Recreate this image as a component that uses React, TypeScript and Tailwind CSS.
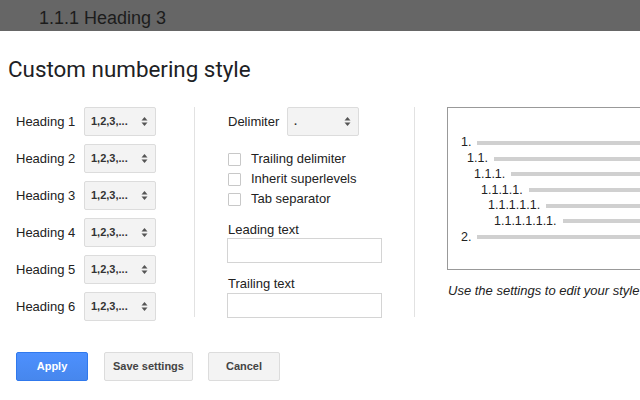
import React from 'react'

const arial = { fontFamily: '"Liberation Sans", Arial, sans-serif' }

function SelectBox({ value, width = 'w-[72px]' }: { value: string; width?: string }) {
  return (
    <div className={`${width} h-[29px] shrink-0 flex items-center justify-between pl-[6px] pr-[6px] bg-[#f3f3f3] border border-[#dcdcdc] rounded-[2px] text-[11px] font-bold text-[#333]`}>
      <span>{value}</span>
      <svg width="7" height="11" viewBox="0 0 7 11" className="mr-[1px]">
        <path d="M3.5 1 L6.5 4.5 L0.5 4.5 Z" fill="#555" />
        <path d="M3.5 10 L6.5 6.5 L0.5 6.5 Z" fill="#555" />
      </svg>
    </div>
  )
}

function Checkbox({ label }: { label: string }) {
  return (
    <div className="flex items-center h-[20px]">
      <div className="w-[13px] h-[13px] border border-[#c8c8c8] bg-white rounded-[1px]" />
      <span className="ml-[10px] text-[13px] text-[#222]">{label}</span>
    </div>
  )
}

const previewRows = [
  { label: '1.', indent: 0 },
  { label: '1.1.', indent: 6 },
  { label: '1.1.1.', indent: 13 },
  { label: '1.1.1.1.', indent: 20 },
  { label: '1.1.1.1.1.', indent: 27 },
  { label: '1.1.1.1.1.1.', indent: 33 },
  { label: '2.', indent: 0 },
]

export default function App() {
  return (
    <div className="w-[640px] h-[400px] overflow-hidden bg-white text-[#222]" style={arial}>
      <div className="h-[31px] bg-[#666666] overflow-hidden flex items-end pl-[39px]">
        <span className="text-[18px] leading-[18px] text-[#1c1c1c] mb-[4px]">1.1.1 Heading 3</span>
      </div>

      <h1 className="mt-[24px] ml-[8px] text-[22.4px] leading-[28px] text-[#202124]" style={{ fontFamily: 'Roboto, "Noto Sans", sans-serif' }}>
        Custom numbering style
      </h1>

      <div className="flex mt-[24px] h-[210px]">
        <div className="w-[178px] shrink-0 ml-[16px] flex flex-col gap-[8px]">
          {[1, 2, 3, 4, 5, 6].map((n) => (
            <div key={n} className="flex items-center">
              <span className="w-[68px] text-[13px]">Heading {n}</span>
              <SelectBox value="1,2,3,..." />
            </div>
          ))}
        </div>

        <div className="w-px shrink-0 bg-[#e2e2e2]" />

        <div className="w-[219px] shrink-0 pl-[33px]">
          <div className="flex items-center">
            <span className="w-[59px] text-[13px]">Delimiter</span>
            <SelectBox value="." />
          </div>
          <div className="mt-[13px] flex flex-col">
            <Checkbox label="Trailing delimiter" />
            <Checkbox label="Inherit superlevels" />
            <Checkbox label="Tab separator" />
          </div>
          <div className="mt-[13px] text-[13px] leading-[15px]">Leading text</div>
          <div className="mt-[1px] w-[155px] h-[25px] border border-[#d4d4d4] -ml-px" />
          <div className="mt-[13px] text-[13px] leading-[15px]">Trailing text</div>
          <div className="mt-[2px] w-[155px] h-[25px] border border-[#d4d4d4] -ml-px" />
        </div>

        <div className="w-px shrink-0 bg-[#e2e2e2]" />

        <div className="pl-[32px] shrink-0">
          <div className="w-[240px] h-[163px] border border-[#999] pt-[27px] pl-[13px] overflow-hidden">
            {previewRows.map((r, i) => (
              <div key={i} className="flex items-center h-[15.7px] text-[12.5px] text-[#222]" style={{ paddingLeft: r.indent }}>
                <span>{r.label}</span>
                <div className="ml-[6px] flex-1 h-[4px] bg-[#d0d0d0]" />
              </div>
            ))}
          </div>
          <div className="mt-[11px] ml-[1px] text-[13px] italic text-[#222] whitespace-nowrap">Use the settings to edit your style</div>
        </div>
      </div>

      <div className="flex mt-[35px] ml-[16px] text-[11px] font-bold">
        <button className="w-[72px] h-[29px] rounded-[2px] border border-[#3079ed] bg-gradient-to-b from-[#4d90fe] to-[#4787ed] text-white">
          Apply
        </button>
        <button className="ml-[16px] w-[89px] h-[29px] rounded-[2px] border border-[#dcdcdc] bg-[#f3f3f3] text-[#444]">
          Save settings
        </button>
        <button className="ml-[15px] w-[72px] h-[29px] rounded-[2px] border border-[#dcdcdc] bg-[#f3f3f3] text-[#444]">
          Cancel
        </button>
      </div>
    </div>
  )
}
